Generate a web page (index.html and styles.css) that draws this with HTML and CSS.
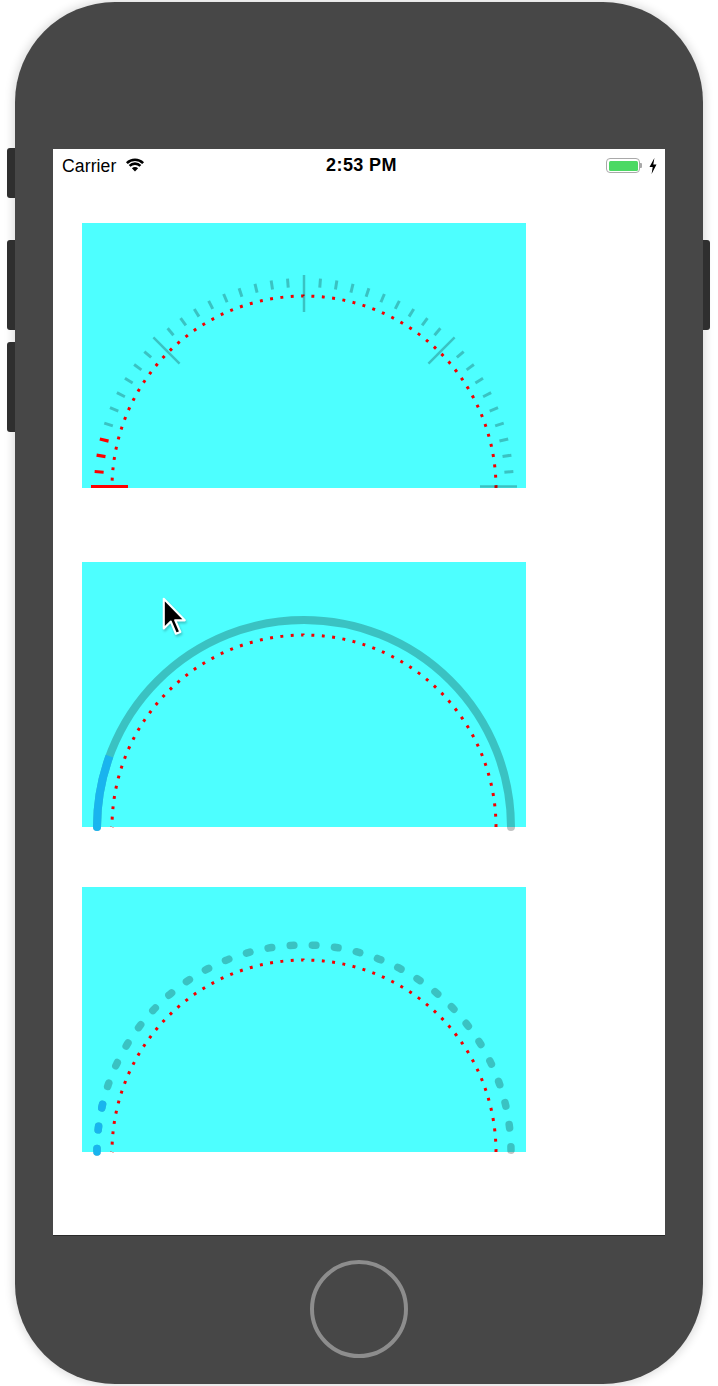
FILE: index.html
```html
<!DOCTYPE html>
<html>
<head>
<meta charset="utf-8">
<link rel="stylesheet" href="styles.css">
</head>
<body>
<div class="device">
  <div class="side-btn btn-mute"></div>
  <div class="side-btn btn-vol-up"></div>
  <div class="side-btn btn-vol-down"></div>
  <div class="side-btn btn-power"></div>

  <div class="screen">
    <div class="statusbar">
      <div class="sb-left">
        <span class="carrier">Carrier</span>
        <svg class="wifi" width="20" height="15" viewBox="0 0 20 15">
          <path d="M10 14.5 L6.9 11.2 A4.4 4.4 0 0 1 13.1 11.2 Z" fill="#000"/>
          <path d="M4.6 8.9 A7.6 7.6 0 0 1 15.4 8.9" stroke="#000" stroke-width="2.6" fill="none"/>
          <path d="M1.9 6.1 A11.5 11.5 0 0 1 18.1 6.1" stroke="#000" stroke-width="2.6" fill="none"/>
        </svg>
      </div>
      <div class="sb-time">2:53 PM</div>
      <div class="sb-right">
        <div class="battery"><div class="battery-fill"></div></div>
        <div class="battery-nub"></div>
        <svg class="bolt" width="8" height="16" viewBox="0 0 8 16">
          <path d="M5.4 0 L0.5 9 L3.7 9 L2.6 16 L7.5 6.6 L4.3 6.6 Z" fill="#000"/>
        </svg>
      </div>
    </div>

    <div class="panel panel-ticks">
      <svg class="gauge" width="444" height="265" viewBox="0 0 444 265">
        <g transform="translate(222 265)">
          <path class="dots" pathLength="580" d="M 192 0 A 192 192 0 0 0 -192 0"/>
          <line class="mj red" x1="-213" x2="-176" y1="-1.5" y2="-1.5"/>
          <line class="mn red" x1="-210" x2="-201" transform="rotate(4.5)"/>
          <line class="mn red" x1="-210" x2="-201" transform="rotate(9)"/>
          <line class="mn red" x1="-210" x2="-201" transform="rotate(13.5)"/>
          <line class="mn" x1="-210" x2="-201" transform="rotate(18)"/>
          <line class="mn" x1="-210" x2="-201" transform="rotate(22.5)"/>
          <line class="mn" x1="-210" x2="-201" transform="rotate(27)"/>
          <line class="mn" x1="-210" x2="-201" transform="rotate(31.5)"/>
          <line class="mn" x1="-210" x2="-201" transform="rotate(36)"/>
          <line class="mn" x1="-210" x2="-201" transform="rotate(40.5)"/>
          <line class="mj" x1="-213" x2="-176" transform="rotate(45)"/>
          <line class="mn" x1="-210" x2="-201" transform="rotate(49.5)"/>
          <line class="mn" x1="-210" x2="-201" transform="rotate(54)"/>
          <line class="mn" x1="-210" x2="-201" transform="rotate(58.5)"/>
          <line class="mn" x1="-210" x2="-201" transform="rotate(63)"/>
          <line class="mn" x1="-210" x2="-201" transform="rotate(67.5)"/>
          <line class="mn" x1="-210" x2="-201" transform="rotate(72)"/>
          <line class="mn" x1="-210" x2="-201" transform="rotate(76.5)"/>
          <line class="mn" x1="-210" x2="-201" transform="rotate(81)"/>
          <line class="mn" x1="-210" x2="-201" transform="rotate(85.5)"/>
          <line class="mj" x1="-213" x2="-176" transform="rotate(90)"/>
          <line class="mn" x1="-210" x2="-201" transform="rotate(94.5)"/>
          <line class="mn" x1="-210" x2="-201" transform="rotate(99)"/>
          <line class="mn" x1="-210" x2="-201" transform="rotate(103.5)"/>
          <line class="mn" x1="-210" x2="-201" transform="rotate(108)"/>
          <line class="mn" x1="-210" x2="-201" transform="rotate(112.5)"/>
          <line class="mn" x1="-210" x2="-201" transform="rotate(117)"/>
          <line class="mn" x1="-210" x2="-201" transform="rotate(121.5)"/>
          <line class="mn" x1="-210" x2="-201" transform="rotate(126)"/>
          <line class="mn" x1="-210" x2="-201" transform="rotate(130.5)"/>
          <line class="mj" x1="-213" x2="-176" transform="rotate(135)"/>
          <line class="mn" x1="-210" x2="-201" transform="rotate(139.5)"/>
          <line class="mn" x1="-210" x2="-201" transform="rotate(144)"/>
          <line class="mn" x1="-210" x2="-201" transform="rotate(148.5)"/>
          <line class="mn" x1="-210" x2="-201" transform="rotate(153)"/>
          <line class="mn" x1="-210" x2="-201" transform="rotate(157.5)"/>
          <line class="mn" x1="-210" x2="-201" transform="rotate(162)"/>
          <line class="mn" x1="-210" x2="-201" transform="rotate(166.5)"/>
          <line class="mn" x1="-210" x2="-201" transform="rotate(171)"/>
          <line class="mn" x1="-210" x2="-201" transform="rotate(175.5)"/>
          <line class="mj" x1="176" x2="213" y1="-1.5" y2="-1.5"/>
        </g>
      </svg>
    </div>

    <div class="panel panel-arc">
      <svg class="gauge open" width="444" height="265" viewBox="0 0 444 265">
        <g transform="translate(222 265)">
          <path class="track" d="M -207 0 A 207 207 0 0 1 207 0"/>
          <path class="fill" d="M -207 0 A 207 207 0 0 1 -194.52 -70.8"/>
          <circle class="fill-cap" cx="-207" cy="0" r="4"/>
          <path class="dots" pathLength="580" d="M 192 0 A 192 192 0 0 0 -192 0"/>
        </g>
      </svg>
      <svg class="cursor" width="24" height="38" viewBox="-1 -1 13.6 21.5">
        <path d="M0 0 L0 16.8 L4 12.9 L6.9 19.8 L9.4 18.8 L6.5 12.2 L11.9 12.2 Z" fill="#000" stroke="#fff" stroke-width="1.2" stroke-linejoin="round"/>
      </svg>
    </div>

    <div class="panel panel-dash">
      <svg class="gauge open" width="444" height="265" viewBox="0 0 444 265">
        <g transform="translate(222 265)">
          <path class="dash-track" pathLength="180" d="M -207 0 A 207 207 0 0 1 207 0"/>
          <path class="dash-fill" pathLength="15" d="M -207 0 A 207 207 0 0 1 -199.95 -53.58"/>
          <path class="dots" pathLength="580" d="M 192 0 A 192 192 0 0 0 -192 0"/>
        </g>
      </svg>
    </div>
  </div>

  <div class="home-btn"></div>
</div>
</body>
</html>
```

FILE: styles.css
```css
html, body {
  margin: 0;
  padding: 0;
  background: #ffffff;
}

body {
  width: 718px;
  height: 1386px;
  overflow: hidden;
  padding-top: 2px;
  box-sizing: border-box;
}

.device {
  position: relative;
  margin-left: 15px;
  width: 688px;
  height: 1382px;
  border-radius: 100px;
  background: #474747;
  box-shadow: 0 0 10px 2px rgba(0, 0, 0, 0.14);
  padding-top: 147px;
  box-sizing: border-box;
  display: flex;
  flex-direction: column;
}

.side-btn {
  position: absolute;
  width: 8px;
  background: #2f2f2f;
}

.btn-mute { left: -8px; top: 146px; height: 50px; border-radius: 3px 0 0 3px; }
.btn-vol-up { left: -8px; top: 238px; height: 90px; border-radius: 3px 0 0 3px; }
.btn-vol-down { left: -8px; top: 340px; height: 90px; border-radius: 3px 0 0 3px; }
.btn-power { right: -7px; top: 238px; width: 7px; height: 90px; border-radius: 0 3px 3px 0; }

.screen {
  margin-left: 38px;
  width: 612px;
  height: 1087px;
  background: #ffffff;
  display: flex;
  flex-direction: column;
  border-bottom: 1px solid #2a2a2a;
  box-sizing: border-box;
}

.statusbar {
  height: 33px;
  display: grid;
  grid-template-columns: 1fr auto 1fr;
  align-items: center;
  padding: 0 8px 0 9px;
  font-family: "Liberation Sans", Arial, sans-serif;
  color: #000;
}

.sb-left {
  display: flex;
  align-items: center;
}

.carrier {
  font-size: 17.6px;
  letter-spacing: 0.1px;
  margin-top: 1px;
}

.wifi {
  margin-left: 9px;
  margin-top: -2px;
}

.sb-time {
  font-size: 18px;
  font-weight: bold;
  letter-spacing: 0.4px;
  margin-left: 4px;
}

.sb-right {
  display: flex;
  align-items: center;
  justify-content: flex-end;
}

.battery {
  width: 34px;
  height: 15px;
  border: 1.5px solid #a9a9a9;
  border-radius: 4px;
  box-sizing: border-box;
  padding: 1.5px;
}

.battery-fill {
  width: 100%;
  height: 100%;
  background: #4cd964;
  border-radius: 1.5px;
}

.battery-nub {
  width: 2px;
  height: 5px;
  background: #a9a9a9;
  border-radius: 0 1px 1px 0;
}

.bolt {
  margin-left: 7px;
}

.panel {
  position: relative;
  margin-left: 29px;
  width: 444px;
  height: 265px;
  background: #4dffff;
  flex: none;
}

.panel-ticks { margin-top: 41px; }
.panel-arc { margin-top: 74px; }
.panel-dash { margin-top: 60px; }

.gauge {
  display: block;
  overflow: hidden;
}

.gauge.open {
  overflow: visible;
}

.dots {
  fill: none;
  stroke: #f40000;
  stroke-width: 3;
  stroke-dasharray: 2.8 7.2;
}

.mn {
  stroke: rgba(0, 0, 0, 0.24);
  stroke-width: 3;
}

.mj {
  stroke: rgba(0, 0, 0, 0.24);
  stroke-width: 2.5;
}

.mn.red, .mj.red {
  stroke: #ff0000;
  stroke-width: 3.2;
}

.track {
  fill: none;
  stroke: rgba(0, 0, 0, 0.24);
  stroke-width: 8;
  stroke-linecap: round;
}

.fill {
  fill: none;
  stroke: #19b4ee;
  stroke-width: 8;
}

.fill-cap {
  fill: #19b4ee;
}

.dash-track {
  fill: none;
  stroke: rgba(0, 0, 0, 0.24);
  stroke-width: 7.5;
  stroke-linecap: round;
  stroke-dasharray: 1 5.155;
}

.dash-fill {
  fill: none;
  stroke: #19b4ee;
  stroke-width: 7.5;
  stroke-linecap: round;
  stroke-dasharray: 1 5.155;
}

.cursor {
  position: absolute;
  left: 80px;
  top: 35px;
  filter: drop-shadow(1px 2px 1px rgba(0, 0, 0, 0.22));
}

.home-btn {
  width: 98px;
  height: 98px;
  border-radius: 50%;
  border: 4px solid #8d8d8d;
  box-sizing: border-box;
  margin: 24px 0 0 295px;
  flex: none;
}
```
